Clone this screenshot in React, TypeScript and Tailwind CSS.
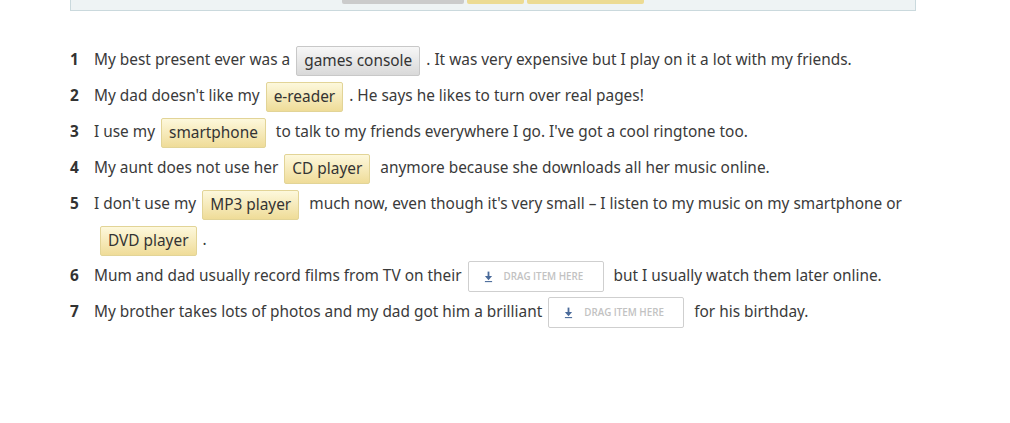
import React from 'react';

type Part = string | { chip: string; tone: 'gray' | 'gold' } | { drop: true };

const items: { n: number; parts: Part[] }[] = [
  { n: 1, parts: ['My best present ever was a', { chip: 'games console', tone: 'gray' }, '. It was very expensive but I play on it a lot with my friends.'] },
  { n: 2, parts: ["My dad doesn't like my", { chip: 'e-reader', tone: 'gold' }, '. He says he likes to turn over real pages!'] },
  { n: 3, parts: ['I use my', { chip: 'smartphone', tone: 'gold' }, " to talk to my friends everywhere I go. I've got a cool ringtone too."] },
  { n: 4, parts: ['My aunt does not use her', { chip: 'CD player', tone: 'gold' }, ' anymore because she downloads all her music online.'] },
  { n: 5, parts: ["I don't use my", { chip: 'MP3 player', tone: 'gold' }, " much now, even though it's very small \u2013 I listen to my music on my smartphone or", { chip: 'DVD player', tone: 'gold' }, '.'] },
  { n: 6, parts: ['Mum and dad usually record films from TV on their', { drop: true }, ' but I usually watch them later online.'] },
  { n: 7, parts: ['My brother takes lots of photos and my dad got him a brilliant', { drop: true }, ' for his birthday.'] },
];

function Chip({ label, tone }: { label: string; tone: 'gray' | 'gold' }) {
  const cls =
    tone === 'gray'
      ? 'border-[#c8c8c8] bg-gradient-to-b from-[#f7f7f7] to-[#d9d9d9]'
      : 'border-[#e2d497] bg-gradient-to-b from-[#fdf8dc] to-[#efdc98]';
  return (
    <span className={`inline-block align-middle mx-[6px] h-[30px] px-[7px] leading-[28px] border rounded-[2px] text-[#333] ${cls}`}>
      {label}
    </span>
  );
}

function DropZone() {
  return (
    <span className="inline-flex items-center align-middle mx-[6px] w-[136px] h-[31px] border border-[#cfcfcf] rounded-[2px] bg-white pl-[15px]">
      <svg width="9" height="12" viewBox="0 0 10 12" className="shrink-0">
        <rect x="4" y="0" width="2" height="6" fill="#4a6a9a" />
        <path d="M1 5 L9 5 L5 9.5 Z" fill="#4a6a9a" />
        <rect x="1" y="10.5" width="8" height="1.2" fill="#4a6a9a" />
      </svg>
      <span className="ml-[11px] text-[9.8px] leading-none font-semibold text-[#c2c2c2] font-['Open_Sans',sans-serif]">DRAG ITEM HERE</span>
    </span>
  );
}

export default function App() {
  return (
    <div className="w-[1010px] h-[423px] bg-white overflow-hidden font-['Noto_Sans',sans-serif] text-[15.4px] text-[#3a3a3a]">
      <div className="ml-[70px] w-[846px] h-[12px] -mt-[1px] bg-[#eef3f4] border border-t-0 border-[#cad9dd] flex justify-start pl-[271px] gap-[3px]">
        <span className="w-[122px] h-[5px] bg-[#cbcbcb] rounded-b-[2px]" />
        <span className="w-[57px] h-[5px] bg-[#ecdb93] rounded-b-[2px]" />
        <span className="w-[117px] h-[5px] bg-[#ecdb93] rounded-b-[2px]" />
      </div>
      <ol className="ml-[70px] mt-[31px] w-[860px]">
        {items.map((it) => (
          <li key={it.n} className="flex leading-[36px]">
            <span className="w-[24px] shrink-0 font-bold text-[#333]">{it.n}</span>
            <p className="flex-1">
              {it.parts.map((p, i) =>
                typeof p === 'string' ? (
                  <span key={i}>{p}</span>
                ) : 'chip' in p ? (
                  <Chip key={i} label={p.chip} tone={p.tone} />
                ) : (
                  <DropZone key={i} />
                )
              )}
            </p>
          </li>
        ))}
      </ol>
    </div>
  );
}
